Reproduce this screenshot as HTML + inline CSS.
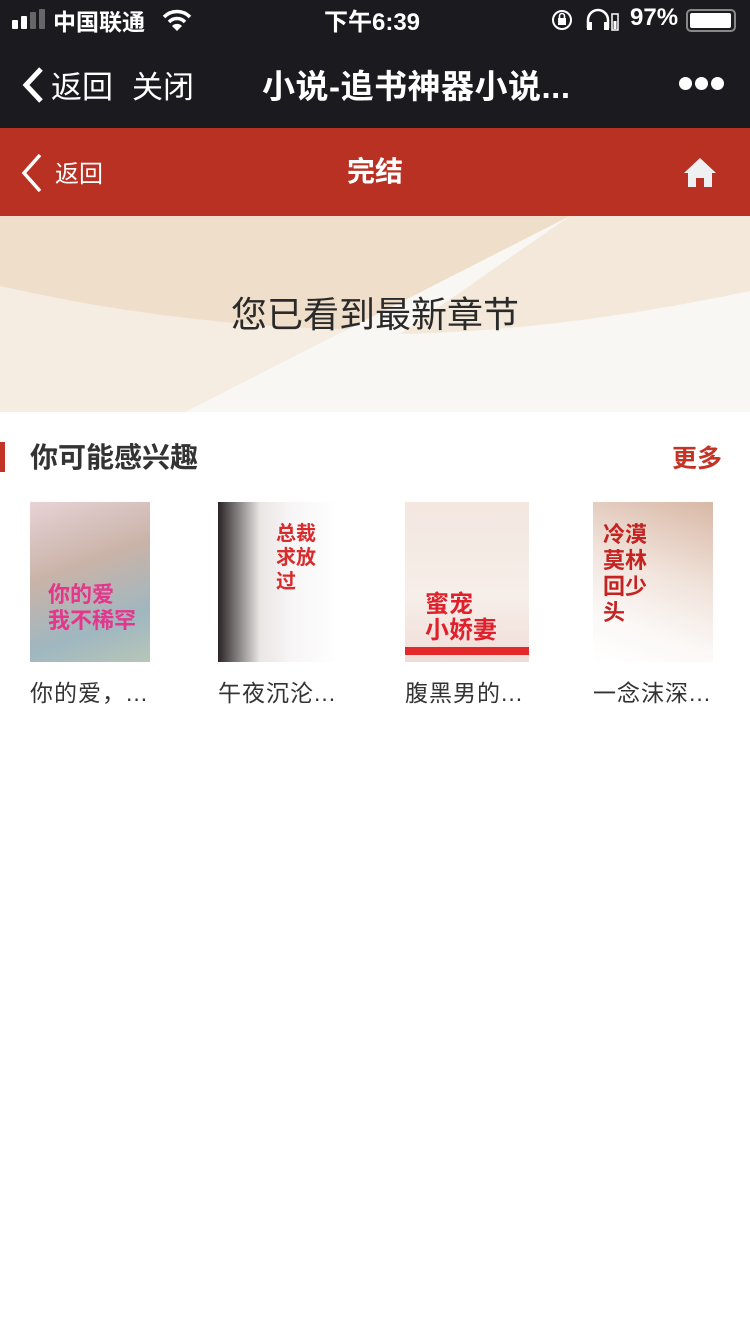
<!DOCTYPE html>
<html><head><meta charset="utf-8"><style>
*{margin:0;padding:0;box-sizing:border-box}
body{width:750px;height:1334px;background:#fff;font-family:"Liberation Sans","Noto Sans CJK SC",sans-serif;position:relative;overflow:hidden}
.abs{position:absolute}
.top{left:0;top:0;width:750px;height:128px;background:#1b1a1f;color:#fff}
.red{left:0;top:128px;width:750px;height:88px;background:#b93122;color:#fff}
.cover{position:absolute;top:502px;height:160px}
.t{position:absolute;top:674px;font-size:23px;color:#333;white-space:nowrap;letter-spacing:1px}
</style></head><body>
<div class="abs top">
  <div class="abs" style="left:12px;top:20px;width:6px;height:9px;background:#fff;border-radius:1px"></div>
  <div class="abs" style="left:21px;top:16px;width:6px;height:13px;background:#fff;border-radius:1px"></div>
  <div class="abs" style="left:30px;top:12px;width:6px;height:17px;background:#666;border-radius:1px"></div>
  <div class="abs" style="left:39px;top:9px;width:6px;height:20px;background:#666;border-radius:1px"></div>
  <div class="abs" style="left:53px;top:3px;font-size:23px;font-weight:bold">中国联通</div>
  <svg class="abs" style="left:162px;top:8px" width="30" height="24" viewBox="0 0 30 24"><path d="M2 9 A18 18 0 0 1 28 9" stroke="#fff" stroke-width="3.5" fill="none"/><path d="M7 14 A11 11 0 0 1 23 14" stroke="#fff" stroke-width="3.5" fill="none"/><path d="M15 23 L10 18 A7 7 0 0 1 20 18 Z" fill="#fff"/></svg>
  <div class="abs" style="left:324px;top:2px;font-size:24px;font-weight:bold">下午6:39</div>
  <svg class="abs" style="left:550px;top:8px" width="24" height="24" viewBox="0 0 24 24"><circle cx="12" cy="12" r="9" stroke="#fff" stroke-width="2" fill="none"/><rect x="8" y="10" width="8" height="7" fill="#fff"/><path d="M9.5 10 V8 a2.5 2.5 0 0 1 5 0 V10" stroke="#fff" stroke-width="1.6" fill="none"/></svg>
  <svg class="abs" style="left:585px;top:8px" width="36" height="24" viewBox="0 0 36 24"><path d="M3 20 V12 a10 10 0 0 1 20 0 V20" stroke="#fff" stroke-width="2.5" fill="none"/><rect x="2" y="14" width="5" height="8" fill="#fff"/><rect x="19" y="14" width="5" height="8" fill="#fff"/><rect x="27" y="6" width="6" height="16" stroke="#fff" stroke-width="1.5" fill="none"/><rect x="28.5" y="13" width="3" height="8" fill="#fff"/></svg>
  <div class="abs" style="left:630px;top:4px;font-size:24px;font-weight:bold">97%</div>
  <div class="abs" style="left:686px;top:9px;width:50px;height:23px;border:2px solid #888;border-radius:5px"><div style="margin:2px;height:15px;width:41px;background:#fff;border-radius:2px"></div></div>
  <svg class="abs" style="left:20px;top:66px" width="26" height="38" viewBox="0 0 26 38"><path d="M21 3 L6 19 L21 35" stroke="#fff" stroke-width="5" fill="none"/></svg>
  <div class="abs" style="left:51px;top:62px;font-size:31px">返回</div>
  <div class="abs" style="left:132px;top:62px;font-size:31px">关闭</div>
  <div class="abs" style="left:262px;top:60px;font-size:33px;font-weight:bold;letter-spacing:0.5px">小说-追书神器小说...</div>
  <div class="abs" style="left:679px;top:77px;width:13px;height:13px;border-radius:7px;background:#fff"></div>
  <div class="abs" style="left:695px;top:77px;width:13px;height:13px;border-radius:7px;background:#fff"></div>
  <div class="abs" style="left:711px;top:77px;width:13px;height:13px;border-radius:7px;background:#fff"></div>
</div>
<div class="abs red">
  <svg class="abs" style="left:18px;top:24px" width="26" height="42" viewBox="0 0 26 42"><path d="M22 3 L6 21 L22 39" stroke="#fff" stroke-width="3.5" fill="none"/></svg>
  <div class="abs" style="left:55px;top:26px;font-size:24px">返回</div>
  <div class="abs" style="left:0;width:750px;text-align:center;top:22px;font-size:28px;font-weight:bold">完结</div>
  <svg class="abs" style="left:683px;top:28px" width="34" height="32" viewBox="0 0 34 32"><path d="M17 2 L1 17 L5 17 L5 31 L13 31 L13 22 L21 22 L21 31 L29 31 L29 17 L33 17 Z" fill="#eef0f2"/></svg>
</div>
<svg class="abs" style="left:0;top:216px" width="750" height="196" viewBox="0 0 750 196">
  <rect width="750" height="196" fill="#f5ece2"/>
  <path d="M0 0 H750 V75 Q375 155 0 70 Z" fill="#efdfca"/>
  <path d="M570 0 H750 V196 H185 Z" fill="#f9f7f4"/>
  <path d="M570 0 H750 V75 Q560 115 400 118 Z" fill="#f3e8da"/>
</svg>
<div class="abs" style="left:0;width:750px;text-align:center;top:286px;font-size:36px;color:#2a2a2a">您已看到最新章节</div>
<div class="abs" style="left:0;top:442px;width:5px;height:30px;background:#c43426"></div>
<div class="abs" style="left:30px;top:436px;font-size:28px;font-weight:bold;color:#333">你可能感兴趣</div>
<div class="abs" style="left:672px;top:439px;font-size:25px;color:#c43426;font-weight:bold">更多</div>

<div class="cover" style="left:30px;width:120px;background:linear-gradient(160deg,#e8d2d6,#c9b3a8 40%,#9fb7c0 75%,#b8c6b8)"><div style="position:absolute;left:18px;top:80px;font-size:22px;color:#e3368c;font-weight:bold;line-height:26px">你的爱<br>我不稀罕</div></div>
<div class="cover" style="left:218px;width:120px;background:linear-gradient(90deg,#2a2426 0%,#e9e6e4 35%,#f7f5f5 60%,#fff)"><div style="position:absolute;left:58px;top:20px;font-size:20px;color:#d92b2b;font-weight:bold;line-height:24px;width:50px">总裁求放过</div></div>
<div class="cover" style="left:405px;width:124px;background:linear-gradient(180deg,#f3e7e0,#f6eee9 60%,#f1dcd7)"><div style="position:absolute;left:20px;top:90px;font-size:24px;color:#e0202a;font-weight:bold;line-height:26px">蜜宠<br>小娇妻</div><div style="position:absolute;left:0;top:145px;width:124px;height:8px;background:#e32929"></div></div>
<div class="cover" style="left:593px;width:120px;background:linear-gradient(200deg,#d8b8a6,#f1e4dc 45%,#fbf8f6 75%,#fff)"><div style="position:absolute;left:10px;top:20px;font-size:22px;color:#c52222;font-weight:bold;line-height:26px;width:50px">冷漠莫林回少头</div></div>

<div class="t" style="left:30px">你的爱，...</div>
<div class="t" style="left:218px">午夜沉沦...</div>
<div class="t" style="left:405px">腹黑男的...</div>
<div class="t" style="left:593px">一念沫深...</div>
</body></html>
